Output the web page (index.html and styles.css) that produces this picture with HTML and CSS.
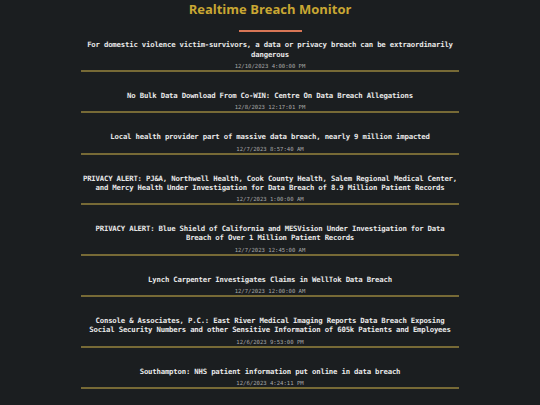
FILE: index.html
```html
<!DOCTYPE html>
<html lang="en">
<head>
<meta charset="utf-8">
<title>Realtime Breach Monitor</title>
<link rel="stylesheet" href="styles.css">
</head>
<body>
<header class="masthead">
  <h1 class="title">Realtime Breach Monitor</h1>
  <div class="divider"></div>
</header>
<main class="feed">
  <article class="item">
    <p class="headline">For domestic violence victim-survivors, a data or privacy breach can be extraordinarily dangerous</p>
    <p class="date">12/10/2023 4:00:00 PM</p>
  </article>
  <article class="item">
    <p class="headline">No Bulk Data Download From Co-WIN: Centre On Data Breach Allegations</p>
    <p class="date">12/8/2023 12:17:01 PM</p>
  </article>
  <article class="item">
    <p class="headline">Local health provider part of massive data breach, nearly 9 million impacted</p>
    <p class="date">12/7/2023 8:57:40 AM</p>
  </article>
  <article class="item">
    <p class="headline">PRIVACY ALERT: PJ&amp;A, Northwell Health, Cook County Health, Salem Regional Medical Center, and Mercy Health Under Investigation for Data Breach of 8.9 Million Patient Records</p>
    <p class="date">12/7/2023 1:00:00 AM</p>
  </article>
  <article class="item">
    <p class="headline">PRIVACY ALERT: Blue Shield of California and MESVision Under Investigation for Data Breach of Over 1 Million Patient Records</p>
    <p class="date">12/7/2023 12:45:00 AM</p>
  </article>
  <article class="item">
    <p class="headline">Lynch Carpenter Investigates Claims in WellTok Data Breach</p>
    <p class="date">12/7/2023 12:00:00 AM</p>
  </article>
  <article class="item">
    <p class="headline">Console &amp; Associates, P.C.: East River Medical Imaging Reports Data Breach Exposing Social Security Numbers and other Sensitive Information of 605k Patients and Employees</p>
    <p class="date">12/6/2023 9:53:00 PM</p>
  </article>
  <article class="item">
    <p class="headline">Southampton: NHS patient information put online in data breach</p>
    <p class="date">12/6/2023 4:24:11 PM</p>
  </article>
</main>
</body>
</html>
```

FILE: styles.css
```css
html, body {
  margin: 0;
  padding: 0;
  background: #1b1e20;
}

body {
  font-family: "DejaVu Sans Mono", "Liberation Mono", monospace;
  color: #e6e6e6;
  overflow: hidden;
}

.masthead {
  display: flex;
  flex-direction: column;
  align-items: center;
  margin-bottom: 8.4px;
}

.title {
  margin: 0;
  font-family: "Open Sans", "Noto Sans", sans-serif;
  font-weight: 700;
  font-size: 13px;
  line-height: 18px;
  color: #c9a733;
}

.divider {
  margin-top: 12px;
  width: 63px;
  height: 2px;
  background: #d87656;
}

.feed {
  display: flex;
  flex-direction: column;
  align-items: center;
  gap: 19px;
}

.item {
  width: 378px;
  border-bottom: 2px solid #776a36;
  text-align: center;
}

.headline {
  margin: 0 1px;
  font-weight: 700;
  font-size: 7.3px;
  line-height: 9.3px;
  letter-spacing: -0.19px;
  color: #e8e8e8;
}

.date {
  margin: 4px 0 0;
  font-size: 5.6px;
  line-height: 7px;
  color: #a8a8a8;
}
```
